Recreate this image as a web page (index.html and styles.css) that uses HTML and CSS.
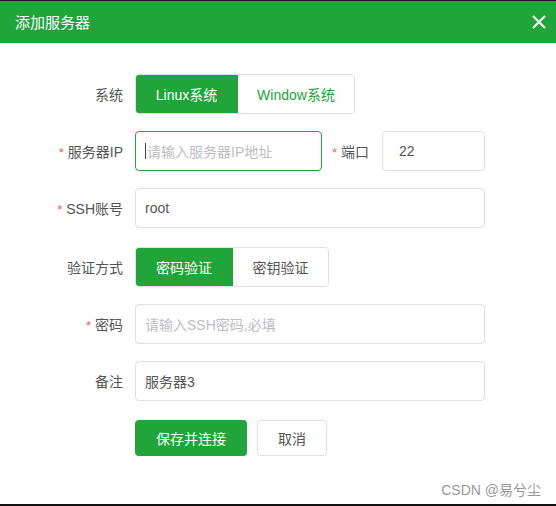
FILE: index.html
```html
<!DOCTYPE html>
<html lang="zh-CN">
<head>
<meta charset="utf-8">
<title>添加服务器</title>
<link rel="stylesheet" href="styles.css">
</head>
<body>
<div class="frame">
  <div class="header">
    <span class="title">添加服务器</span>
    <svg class="close" width="14" height="14" viewBox="0 0 14 14"><path d="M1 1L13 13M13 1L1 13" stroke="#fff" stroke-width="2" fill="none"/></svg>
  </div>
  <div class="form">
    <div class="row r-seg">
      <div class="label">系统</div>
      <div class="seg">
        <div class="seg-btn active w-linux">Linux系统</div>
        <div class="seg-btn green-text w-win">Window系统</div>
      </div>
    </div>
    <div class="row">
      <div class="label"><span class="req">*</span>服务器IP</div>
      <div class="input focus w-ip"><span class="caret"></span><span class="ph">请输入服务器IP地址</span></div>
      <div class="sublabel"><span class="req">*</span>端口</div>
      <div class="input w-port pad-port"><span class="val">22</span></div>
    </div>
    <div class="row mb19">
      <div class="label"><span class="req">*</span>SSH账号</div>
      <div class="input w-full"><span class="val">root</span></div>
    </div>
    <div class="row">
      <div class="label">验证方式</div>
      <div class="seg">
        <div class="seg-btn active w-a1">密码验证</div>
        <div class="seg-btn w-a2">密钥验证</div>
      </div>
    </div>
    <div class="row">
      <div class="label"><span class="req">*</span>密码</div>
      <div class="input w-full"><span class="ph">请输入SSH密码,必填</span></div>
    </div>
    <div class="row mb19">
      <div class="label">备注</div>
      <div class="input w-full"><span class="val">服务器3</span></div>
    </div>
    <div class="row actions">
      <div class="label"></div>
      <div class="btn primary">保存并连接</div>
      <div class="btn plain">取消</div>
    </div>
  </div>
  <div class="watermark">CSDN @易兮尘</div>
</div>
</body>
</html>
```
FILE: styles.css
```css
* { box-sizing: border-box; }
html, body { margin: 0; padding: 0; background: #fff; }
body {
  font-family: "Liberation Sans", "Noto Sans CJK SC", sans-serif;
  font-size: 14px;
  color: #555;
}
.frame {
  width: 556px;
  height: 506px;
  border-top: 1px solid #1a1a1a;
  border-bottom: 2px solid #111;
  display: flex;
  flex-direction: column;
}
.header {
  height: 42px;
  background: #20a53a;
  display: flex;
  align-items: center;
  justify-content: space-between;
  padding: 0 10px 0 15px;
  flex: 0 0 auto;
}
.title { color: #fff; font-size: 15px; margin-top: -1px; }
.close { display: block; margin-top: -1px; }
.form {
  padding-top: 31px;
  display: flex;
  flex-direction: column;
}
.row {
  display: flex;
  align-items: center;
  height: 40px;
  margin-bottom: 17px;
}
.row.mb19 { margin-bottom: 19px; }
.label {
  flex: 0 0 135px;
  padding-right: 12px;
  text-align: right;
  color: #555;
}
.req { color: #f0625f; margin-right: 4px; font-size: 13px; }
.seg {
  display: flex;
  height: 40px;
  border: 1px solid #dcdfe6;
  border-radius: 4px;
  overflow: hidden;
}
.seg-btn {
  display: flex;
  align-items: center;
  justify-content: center;
  color: #555;
  background: #fff;
}
.seg-btn.active { background: #20a53a; color: #fff; margin: -1px 0 -1px -1px; }
.seg-btn.green-text { color: #20a53a; }
.w-linux { width: 103px; }
.w-win { width: 116px; }
.w-a1 { width: 98px; }
.w-a2 { width: 95px; }
.input {
  height: 40px;
  border: 1px solid #dcdfe6;
  border-radius: 4px;
  display: flex;
  align-items: center;
  padding-left: 9px;
  font-size: 14px;
}
.input.focus { border-color: #20a53a; }
.caret { width: 1px; height: 16px; background: #444; margin-right: 1px; }
.ph { color: #bcbcc4; }
.val { color: #555; }
.w-ip { width: 187px; }
.w-port { width: 103px; }
.pad-port { padding-left: 16px; }
.w-full { width: 350px; }
.sublabel { margin-left: 10px; flex: 0 0 50px; color: #555; }
.actions { height: 36px; margin-bottom: 0; }
.btn {
  height: 36px;
  border-radius: 4px;
  display: flex;
  align-items: center;
  justify-content: center;
  font-size: 14px;
}
.btn.primary { width: 112px; background: #20a53a; color: #fff; }
.btn.plain { width: 70px; margin-left: 10px; border: 1px solid #dcdfe6; color: #555; background: #fff; }
.watermark {
  margin-top: auto;
  margin-bottom: 5px;
  align-self: flex-end;
  padding-right: 15px;
  color: #999;
  font-size: 14px;
}
```
